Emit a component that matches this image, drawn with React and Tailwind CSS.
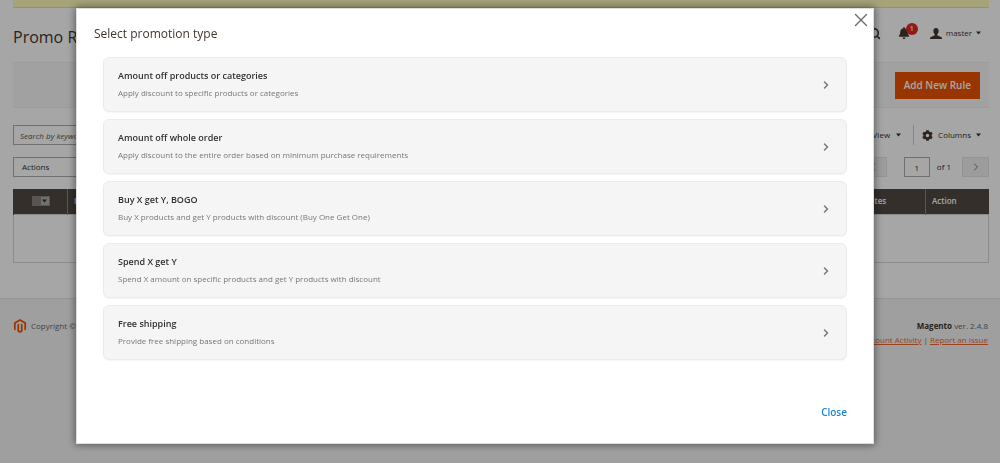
import React, { useState } from 'react';
import { ChevronLeft, ChevronRight, Search, X } from 'lucide-react';
import { FaBell, FaCog } from 'react-icons/fa';
import { SiMagento } from 'react-icons/si';

const promotionTypes = [
    {
        id: 'products',
        title: 'Amount off products or categories',
        description: 'Apply discount to specific products or categories',
    },
    {
        id: 'order',
        title: 'Amount off whole order',
        description: 'Apply discount to the entire order based on minimum purchase requirements',
    },
    {
        id: 'bogo',
        title: 'Buy X get Y, BOGO',
        description: 'Buy X products and get Y products with discount (Buy One Get One)',
    },
    {
        id: 'spend',
        title: 'Spend X get Y',
        description: 'Spend X amount on specific products and get Y products with discount',
    },
    {
        id: 'shipping',
        title: 'Free shipping',
        description: 'Provide free shipping based on conditions',
    },
];

const Caret = () => (
    <svg viewBox="0 0 10 6" className="w-[5px] h-[4px]" fill="currentColor">
        <path d="M0 0h10L5 6z" />
    </svg>
);

const UserIcon = () => (
    <svg viewBox="0 0 22 20" className="w-[12px] h-[11px]" fill="currentColor">
        <path d="M11 0c3 0 4.800 2 4.800 5.200 0 2.600-1 4.800-2.500 6v1.300c0 .8.500 1.200 1.500 1.600l4.700 1.700c1.600.6 2.500 1.700 2.500 4.200H0c0-2.500.9-3.600 2.500-4.200l4.700-1.700c1-.4 1.500-.8 1.500-1.600v-1.300c-1.500-1.200-2.500-3.400-2.500-6C6.200 2 8 0 11 0z" />
    </svg>
);

const PageHeader = () => (
    <header className="flex items-center justify-between h-[54px] pr-2">
        <h1 className="pt-1 text-[16px] text-[#41362f]">Promo Rules</h1>
        <div className="flex items-center pb-1 text-[#41362f]">
            <button aria-label="Search" className="mr-[17px]">
                <Search size={13} strokeWidth={3} />
            </button>
            <button aria-label="Notifications" className="relative mr-5">
                <FaBell size={12} />
                <span className="absolute -top-1 left-2 w-3 h-3 rounded-full bg-[#e22626] text-white text-[7px] leading-3 font-semibold text-center">
                    1
                </span>
            </button>
            <button className="flex items-center text-[8px]">
                <UserIcon />
                <span className="mx-1">master</span>
                <Caret />
            </button>
        </div>
    </header>
);

const GridControls = () => (
    <>
        <div className="flex items-center justify-between mt-[17px]">
            <input
                type="text"
                aria-label="Search by keyword"
                placeholder="Search by keyword"
                className="w-1/4 h-5 px-1.5 bg-white border border-[#adadad] text-[8px] italic placeholder:text-[#555]"
            />
            <div className="flex items-center text-[8px]">
                <button className="flex items-center gap-1.5 pr-3">
                    Default View
                    <Caret />
                </button>
                <button className="flex items-center h-5 px-2 border-l border-[#ccc]">
                    <FaCog size={11} className="text-[#41362f]" />
                    <span className="mx-[5px]">Columns</span>
                    <Caret />
                </button>
            </div>
        </div>

        <div className="flex items-center justify-between mt-3">
            <select
                aria-label="Actions"
                className="appearance-none w-1/5 h-5 px-2 bg-white border border-[#adadad] text-[8px]"
            >
                <option>Actions</option>
            </select>
            <div className="flex items-center text-[8px]">
                <button
                    aria-label="Previous page"
                    className="flex items-center justify-center w-[27px] h-5 bg-[#f0f0f0] border border-[#e3e3e3] text-[#777]"
                >
                    <ChevronLeft size={12} />
                </button>
                <input
                    type="text"
                    aria-label="Page"
                    defaultValue="1"
                    className="w-[26px] h-5 ml-[17px] mr-[7px] bg-white border border-[#adadad] text-center"
                />
                <span>of 1</span>
                <button
                    aria-label="Next page"
                    className="flex items-center justify-center w-[27px] h-5 ml-[11px] bg-[#f0f0f0] border border-[#e3e3e3] text-[#777]"
                >
                    <ChevronRight size={12} />
                </button>
            </div>
        </div>
    </>
);

const RulesTable = () => (
    <table className="w-full mt-3 text-[8px] border-collapse table-fixed">
        <thead>
            <tr className="h-[25px] bg-[#514943] text-white text-left">
                <th className="w-[54px] border-l border-l-[#514943] border-r border-r-[#8a837f]">
                    <button aria-label="Select rows" className="flex items-center mx-auto border border-[#8a837f]">
                        <span className="w-2 h-2 bg-[#8a837f]"></span>
                        <span className="flex items-center justify-center w-2 h-2 bg-[#adadad] text-[#303030]">
                            <Caret />
                        </span>
                    </button>
                </th>
                <th className="w-[80px] px-1.5 font-semibold border-r border-[#8a837f]">ID</th>
                <th className="px-1.5 font-semibold border-r border-[#8a837f]">Name</th>
                <th className="w-[68px] px-1.5 font-semibold border-r border-[#8a837f]">Dates</th>
                <th className="w-[63px] px-1.5 font-semibold">Action</th>
            </tr>
        </thead>
        <tbody>
            <tr className="h-12">
                <td colSpan={5} className="border border-[#d6d6d6]"></td>
            </tr>
        </tbody>
    </table>
);

const Footer = () => (
    <footer className="flex-1 mt-[35px] pt-5 pl-[13px] pr-3 bg-[#f5f5f5] border-t border-[#e3e3e3]">
        <div className="flex items-start justify-between text-[8px] leading-[14px] text-[#666]">
            <p className="flex items-center gap-1">
                <SiMagento size={14} className="text-[#eb5202]" />
                Copyright © Magento Commerce Inc.
            </p>
            <div className="text-right">
                <p>
                    <strong className="font-bold text-[#41362f]">Magento</strong> ver. 2.4.8
                </p>
                <p>
                    <a href="#activity" className="text-[#ef672f] underline">Account Activity</a>
                    {' | '}
                    <a href="#issue" className="text-[#ef672f] underline">Report an Issue</a>
                </p>
            </div>
        </div>
    </footer>
);

const PromotionModal = ({ onClose }) => {
    const [selected, setSelected] = useState(null);

    return (
        <div className="fixed inset-0 bg-black/35 pt-2 pl-[76px] pr-[126px]">
            <div
                role="dialog"
                aria-labelledby="promotion-title"
                className="relative bg-white border border-[#ddd] px-[26px] pb-[23px] shadow-[0_0_8px_1px_rgba(0,0,0,0.45)]"
            >
                <button
                    aria-label="Close dialog"
                    onClick={onClose}
                    className="absolute top-0 right-px text-[#736963]"
                >
                    <X size={22} strokeWidth={1.5} />
                </button>

                <h2 id="promotion-title" className="-ml-[9px] pt-[15px] pb-[13px] text-[12px] leading-5 text-[#41362f]">
                    Select promotion type
                </h2>

                {/* Types */}
                <div className="flex flex-col gap-[7px]">
                    {promotionTypes.map((type) => (
                        <button
                            key={type.id}
                            onClick={() => setSelected(type.id)}
                            aria-pressed={selected === type.id}
                            className="flex items-center justify-between h-[55px] px-[14px] text-left bg-[#f5f5f5] border border-[#ebebeb] rounded-md shadow-[0_1px_1px_rgba(0,0,0,0.04)]"
                        >
                            <span className="pb-0.5">
                                <span className="block text-[9px] leading-[18px] font-semibold text-[#303030]">
                                    {type.title}
                                </span>
                                <span className="block text-[8px] leading-4 text-[#777]">
                                    {type.description}
                                </span>
                            </span>
                            <ChevronRight size={12} strokeWidth={3} className="text-[#777]" />
                        </button>
                    ))}
                </div>

                <div className="flex justify-end mt-[44px]">
                    <button onClick={onClose} className="text-[10px] leading-4 font-semibold text-[#1a86d8]">
                        Close
                    </button>
                </div>
            </div>
        </div>
    );
};

export default function App() {
    const [open, setOpen] = useState(true);

    return (
        <div className="min-h-screen flex flex-col bg-white text-[#303030] font-['Open_Sans',sans-serif]">
            <main className="pl-[13px] pr-[11px]">
                <div className="h-2 bg-[#fffbbb] border-b border-[#e3e0b0]"></div>
                <PageHeader />
                <div className="flex items-center justify-end h-[46px] px-[9px] bg-[#f8f8f8] border-y border-[#f0f0f0]">
                    <button
                        onClick={() => setOpen(true)}
                        className="h-[27px] px-[9px] bg-[#eb5202] text-white text-[10px] font-semibold"
                    >
                        Add New Rule
                    </button>
                </div>
                <GridControls />
                <RulesTable />
            </main>
            <Footer />
            {open && <PromotionModal onClose={() => setOpen(false)} />}
        </div>
    );
}
